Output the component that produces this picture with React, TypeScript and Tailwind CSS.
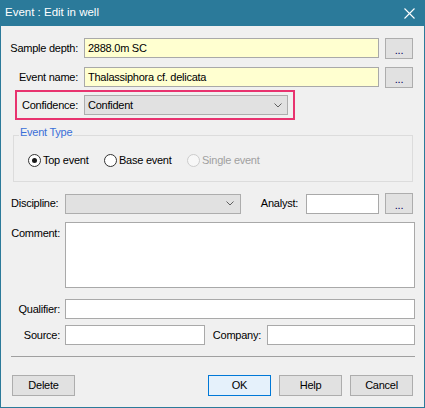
import React from "react";

function Chevron() {
  return (
    <svg width="8" height="5" viewBox="0 0 8 5" fill="none" stroke="#606060" strokeWidth="1">
      <path d="M0.5 0.5 L4 4 L7.5 0.5" />
    </svg>
  );
}

function CloseIcon() {
  return (
    <svg width="11" height="11" viewBox="0 0 11 11" fill="none" stroke="#ffffff" strokeWidth="1.1">
      <path d="M0.5 0.5 L10.5 10.5 M10.5 0.5 L0.5 10.5" />
    </svg>
  );
}

function DotsButton() {
  return (
    <button
      type="button"
      className="ml-[6px] flex h-[21px] w-[28px] items-center justify-center border border-[#adadad] bg-[#e1e1e1] pt-[4px] text-[11px] text-[#000060]"
    >
      ...
    </button>
  );
}

function Radio({ label, checked, disabled, width }: { label: string; checked?: boolean; disabled?: boolean; width: string }) {
  return (
    <div className={`flex items-center gap-[2px] ${width}`}>
      <span
        className={
          disabled
            ? "flex h-[13px] w-[13px] items-center justify-center rounded-full border border-[#cccccc] bg-[#f7f7f7]"
            : "flex h-[13px] w-[13px] items-center justify-center rounded-full border border-[#333333] bg-white"
        }
      >
        {checked ? <span className="h-[5px] w-[5px] rounded-full bg-[#1a1a1a]" /> : null}
      </span>
      <span className={disabled ? "text-[#a0a0a0]" : "text-black"}>{label}</span>
    </div>
  );
}

function PushButton({ label, primary }: { label: string; primary?: boolean }) {
  return (
    <button
      type="button"
      className={
        primary
          ? "h-[21px] w-[63px] border border-[#0078d7] bg-[#e5f1fb] text-[11px]"
          : "h-[21px] w-[63px] border border-[#adadad] bg-[#e1e1e1] text-[11px]"
      }
    >
      {label}
    </button>
  );
}

export default function App() {
  return (
    <div className="flex h-[408px] w-[425px] flex-col bg-[#2b7a9a] px-px pb-px font-['Liberation_Sans',Arial,sans-serif] text-[11px] tracking-[-0.25px] text-black">
      <div className="flex h-[26px] shrink-0 items-center justify-between pl-[4px] pr-[9px] text-[11.5px] tracking-normal text-white">
        <span>Event : Edit in well</span>
        <CloseIcon />
      </div>
      <div className="flex flex-1 flex-col bg-[#f0f0f0]">
        {/* sample depth */}
        <div className="mt-[12px] flex items-start">
          <span className="h-[20px] w-[83px] pr-[6px] text-right leading-[20px]">Sample depth:</span>
          <div className="h-[20px] w-[295px] border border-[#a9a9a9] bg-[#ffffd0] pl-[3px] leading-[18px]">2888.0m SC</div>
          <DotsButton />
        </div>
        {/* event name */}
        <div className="mt-[8px] flex items-start">
          <span className="h-[20px] w-[83px] pr-[6px] text-right leading-[20px]">Event name:</span>
          <div className="h-[20px] w-[295px] border border-[#a9a9a9] bg-[#ffffd0] pl-[3px] leading-[18px]">
            Thalassiphora cf. delicata
          </div>
          <DotsButton />
        </div>
        {/* confidence */}
        <div className="ml-[14px] mt-[2px] flex h-[30px] w-[280px] items-center border-2 border-[#e8336f]">
          <span className="w-[67px] pr-[6px] text-right">Confidence:</span>
          <div className="flex h-[20px] w-[204px] items-center justify-between border border-[#adadad] bg-[#e1e1e1] pl-[3px] pr-[5px]">
            <span>Confident</span>
            <Chevron />
          </div>
        </div>
        {/* event type */}
        <fieldset className="ml-[12px] mt-[6px] w-[400px] border border-[#dcdcdc]">
          <legend className="ml-[5px] px-px pb-[6px] leading-[13px] text-[#3a6fd8]">Event Type</legend>
          <div className="mb-[14px] ml-[14px] mt-[9px] flex h-[13px] items-center">
            <Radio label="Top event" checked width="w-[76px]" />
            <Radio label="Base event" width="w-[83px]" />
            <Radio label="Single event" disabled width="w-[100px]" />
          </div>
        </fieldset>
        {/* discipline / analyst */}
        <div className="mt-[11px] flex items-center">
          <span className="w-[64px] pl-[10px]">Discipline:</span>
          <div className="flex h-[20px] w-[176px] items-center justify-end border border-[#adadad] bg-[#e1e1e1] pr-[6px]">
            <Chevron />
          </div>
          <span className="w-[65px] pr-[8px] text-right">Analyst:</span>
          <div className="h-[20px] w-[73px] border border-[#a9a9a9] bg-white" />
          <DotsButton />
        </div>
        {/* comment */}
        <div className="mt-[8px] flex items-start">
          <span className="w-[64px] pr-[5px] pt-[3px] text-right">Comment:</span>
          <div className="h-[66px] w-[350px] border border-[#a9a9a9] bg-white" />
        </div>
        {/* qualifier */}
        <div className="mt-[11px] flex items-center">
          <span className="w-[64px] pr-[5px] text-right">Qualifier:</span>
          <div className="h-[20px] w-[350px] border border-[#a9a9a9] bg-white" />
        </div>
        {/* source / company */}
        <div className="mt-[6px] flex items-center">
          <span className="w-[64px] pr-[5px] text-right">Source:</span>
          <div className="h-[20px] w-[140px] border border-[#a9a9a9] bg-white" />
          <span className="w-[62px] pr-[6px] text-right">Company:</span>
          <div className="h-[20px] w-[148px] border border-[#a9a9a9] bg-white" />
        </div>
        <div className="ml-[10px] mt-[11px] h-px w-[404px] bg-[#a0a0a0]" />
        {/* buttons */}
        <div className="mt-[18px] flex items-center justify-between px-[11px]">
          <PushButton label="Delete" />
          <div className="flex gap-[8px]">
            <PushButton label="OK" primary />
            <PushButton label="Help" />
            <PushButton label="Cancel" />
          </div>
        </div>
      </div>
    </div>
  );
}
